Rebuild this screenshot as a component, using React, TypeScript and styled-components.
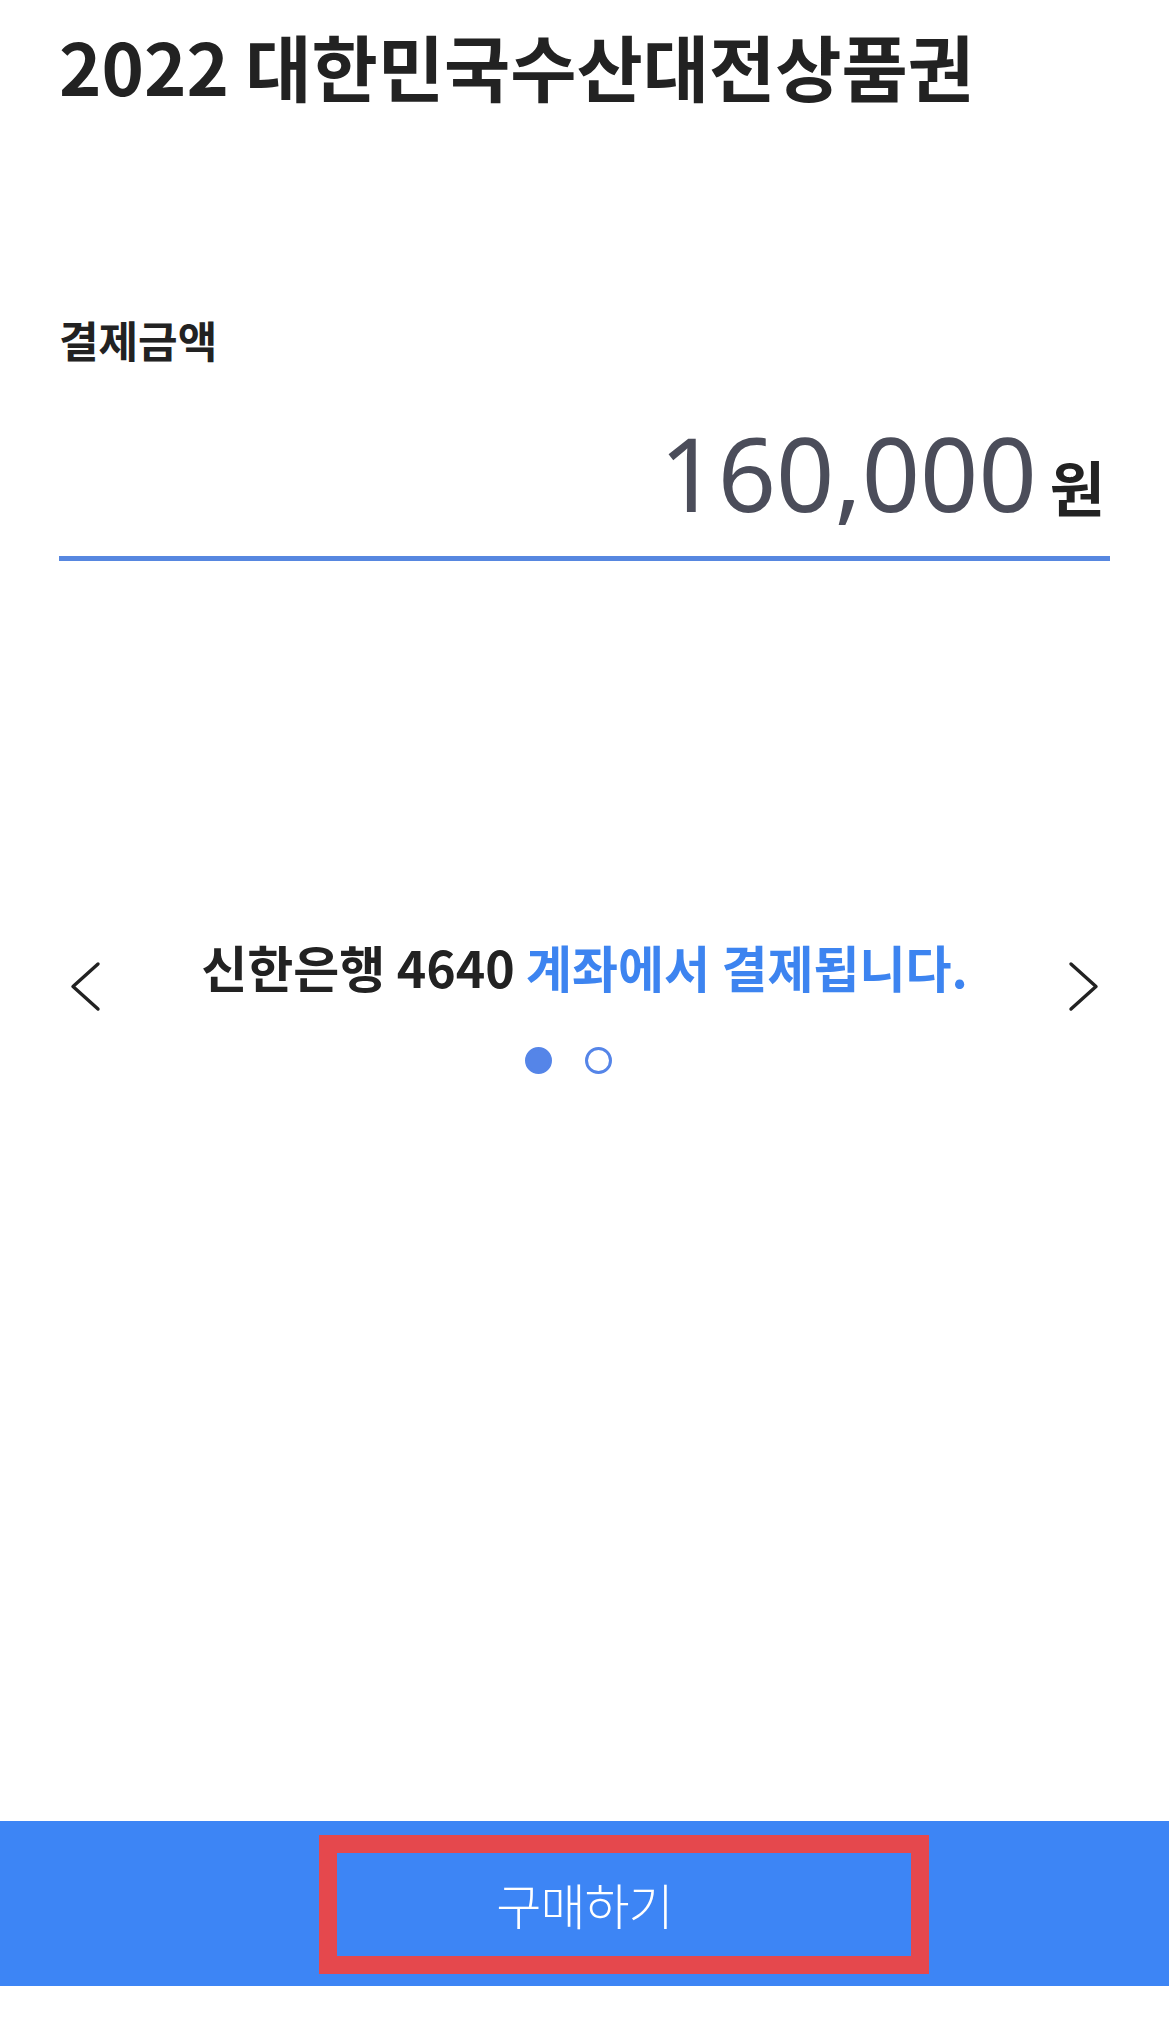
import React from 'react';
import styled, {createGlobalStyle} from 'styled-components';

const GlobalStyle = createGlobalStyle`
  html, body {
    margin: 0;
    padding: 0;
    background: #ffffff;
  }
  body {
    font-family: 'Noto Sans CJK KR', 'Noto Sans', sans-serif;
    color: #222222;
  }
`;

const ChevronIcon = ({dir}: {dir: 'left' | 'right'}) => (
  <svg width="44" height="56" viewBox="0 0 44 56" fill="none">
    <path
      d={dir === 'left' ? 'M39 5 L14 27.5 L39 50' : 'M5 5 L30 27.5 L5 50'}
      stroke="#222222"
      strokeWidth="3.4"
      strokeLinecap="round"
      strokeLinejoin="round"
    />
  </svg>
);

export default function App() {
  return (
    <>
      <GlobalStyle />
      <Page>
        <Content>
          <Title>2022 대한민국수산대전상품권</Title>
          <Label>결제금액</Label>
          <AmountRow>
            <Amount>160,000</Amount>
            <Currency>원</Currency>
          </AmountRow>
          <Carousel>
            <ArrowButton aria-label="이전">
              <ChevronIcon dir="left" />
            </ArrowButton>
            <AccountText>
              신한은행 4640 <Accent>계좌에서 결제됩니다.</Accent>
            </AccountText>
            <ArrowButton aria-label="다음">
              <ChevronIcon dir="right" />
            </ArrowButton>
          </Carousel>
          <Dots>
            <Dot active />
            <Dot />
          </Dots>
        </Content>
        <BuyBar>
          <BuyLabel>구매하기</BuyLabel>
          <Highlight />
        </BuyBar>
      </Page>
    </>
  );
}

const Page = styled.div`
  display: flex;
  flex-direction: column;
  width: 1169px;
  height: 2023px;
  overflow: hidden;
`;

const Content = styled.main`
  display: flex;
  flex-direction: column;
  padding: 0 59px;
`;

const Title = styled.h1`
  margin: 29px 0 0;
  font-size: 72px;
  line-height: 1;
  font-weight: 700;
  color: #222222;
  white-space: nowrap;
`;

const Label = styled.div`
  margin-top: 217px;
  font-size: 43px;
  line-height: 1;
  font-weight: 700;
  color: #222222;
`;

const AmountRow = styled.div`
  display: flex;
  justify-content: flex-end;
  align-items: baseline;
  gap: 13px;
  margin-top: 61px;
  padding: 0 5px 32px 0;
  border-bottom: 5px solid #5787e0;
`;

const Amount = styled.span`
  font-family: 'Noto Sans', 'Open Sans', sans-serif;
  font-size: 102px;
  line-height: 1;
  font-weight: 400;
  color: #4b4d5a;
`;

const Currency = styled.span`
  font-size: 60px;
  line-height: 1;
  font-weight: 700;
  color: #222222;
`;

const Carousel = styled.div`
  display: flex;
  justify-content: space-between;
  align-items: flex-start;
  margin-top: 380px;
`;

const ArrowButton = styled.button`
  display: flex;
  width: 44px;
  height: 56px;
  margin-top: 18px;
  padding: 0;
  border: 0;
  background: none;
  cursor: pointer;
`;

const AccountText = styled.p`
  margin: 0;
  font-size: 50px;
  line-height: 1;
  font-weight: 700;
  color: #222222;
  white-space: nowrap;
`;

const Accent = styled.span`
  color: #3d84f0;
`;

const Dots = styled.div`
  display: flex;
  justify-content: center;
  gap: 33px;
  margin-top: 32px;
  padding-right: 32px;
`;

const Dot = styled.span<{active?: boolean}>`
  box-sizing: border-box;
  width: 27px;
  height: 27px;
  border-radius: 50%;
  border: 3px solid #5585e8;
  background: ${(p) => (p.active ? '#5585e8' : '#ffffff')};
`;

const BuyBar = styled.button`
  position: relative;
  display: flex;
  align-items: center;
  justify-content: center;
  height: 165px;
  margin-top: auto;
  margin-bottom: 37px;
  padding: 0;
  border: 0;
  background: #3d85f5;
  cursor: pointer;
`;

const BuyLabel = styled.span`
  font-family: 'Noto Sans CJK KR', sans-serif;
  font-size: 49px;
  font-weight: 300;
  color: #ffffff;
  letter-spacing: -1px;
`;

const Highlight = styled.span`
  position: absolute;
  left: 319px;
  top: 14px;
  width: 610px;
  height: 139px;
  box-sizing: border-box;
  border: 18px solid #e5484d;
  pointer-events: none;
`;
